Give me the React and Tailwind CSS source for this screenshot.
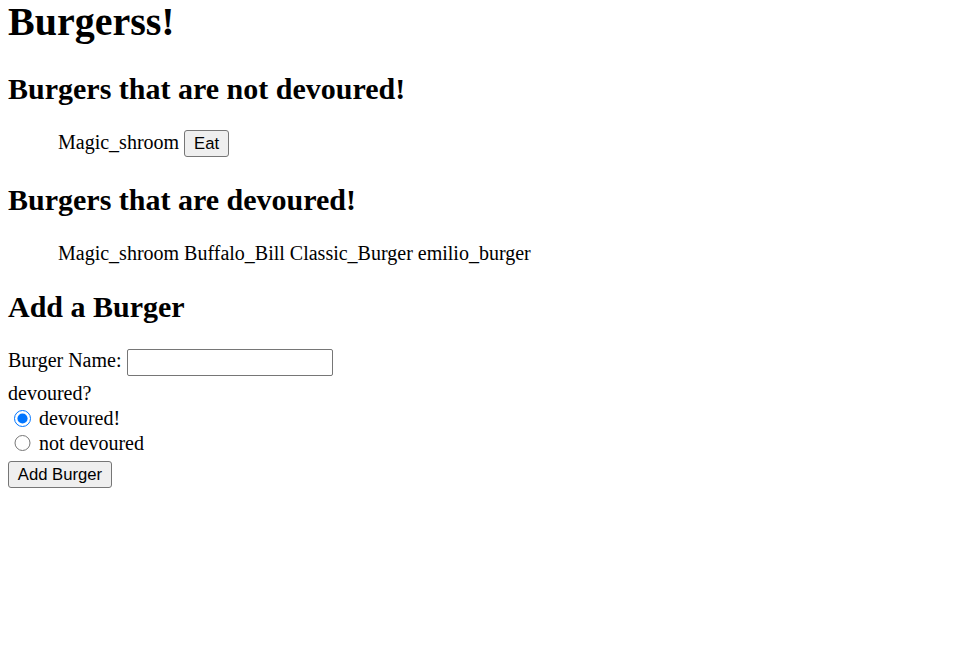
export default function App() {
  const devoured = ["Magic_shroom", "Buffalo_Bill", "Classic_Burger", "emilio_burger"];

  return (
    <div className="min-h-screen bg-white pl-2 text-black font-['Liberation_Serif','Times_New_Roman',serif] text-[20px] leading-[23px]">
      <h1 className="-mt-px text-[40px] font-bold leading-[46px]">Burgerss!</h1>

      <h2 className="mt-[27px] text-[30px] font-bold leading-[34.5px]">Burgers that are not devoured!</h2>
      <ul className="mt-[23.5px] pl-[50px]">
        <li>
          Magic_shroom{" "}
          <button className="inline-block h-[27px] w-[45px] rounded-[3px] border border-[#767676] bg-[#efefef] align-baseline font-['Liberation_Sans',Arial,sans-serif] text-[16.67px] leading-[25px] text-black">
            Eat
          </button>
        </li>
      </ul>

      <h2 className="mt-[26px] text-[30px] font-bold leading-[34.5px]">Burgers that are devoured!</h2>
      <ul className="mt-[24.6px] pl-[50px]">
        {devoured.map((name, i) => (
          <li key={name} className="inline">
            {name}
            {i < devoured.length - 1 ? " " : ""}
          </li>
        ))}
      </ul>

      <h2 className="mt-[25px] text-[30px] font-bold leading-[34.5px]">Add a Burger</h2>
      <form onSubmit={e => e.preventDefault()}>
        <div className="mt-[24.8px] flex items-start">
          <label htmlFor="burger_name">Burger Name:</label>
          <input
            id="burger_name"
            type="text"
            className="ml-[5px] h-[26.5px] w-[206px] rounded-[2px] border border-[#767676] bg-white px-[2px] font-['Liberation_Sans',Arial,sans-serif] text-[16.67px] outline-none"
          />
        </div>
        <div className="mt-[6.2px]">devoured?</div>
        <div className="flex h-[24.7px] items-start">
          <input type="radio" name="devoured" defaultChecked className="m-0 ml-[6px] mt-[5px] mr-[3.5px] h-[16.5px] w-[16.5px]" />
          <span className="ml-[5px] mt-[1.7px]">devoured!</span>
        </div>
        <div className="flex h-[24.7px] items-start">
          <input type="radio" name="devoured" className="m-0 ml-[6px] mt-[5px] mr-[3.5px] h-[16.5px] w-[16.5px]" />
          <span className="ml-[5px] mt-[2.2px]">not devoured</span>
        </div>
        <div className="mt-[6.6px]">
          <button
            type="submit"
            className="inline-block h-[27px] w-[104px] rounded-[3px] border border-[#767676] bg-[#efefef] font-['Liberation_Sans',Arial,sans-serif] text-[16.67px] leading-[25px] text-black"
          >
            Add Burger
          </button>
        </div>
      </form>
    </div>
  );
}
